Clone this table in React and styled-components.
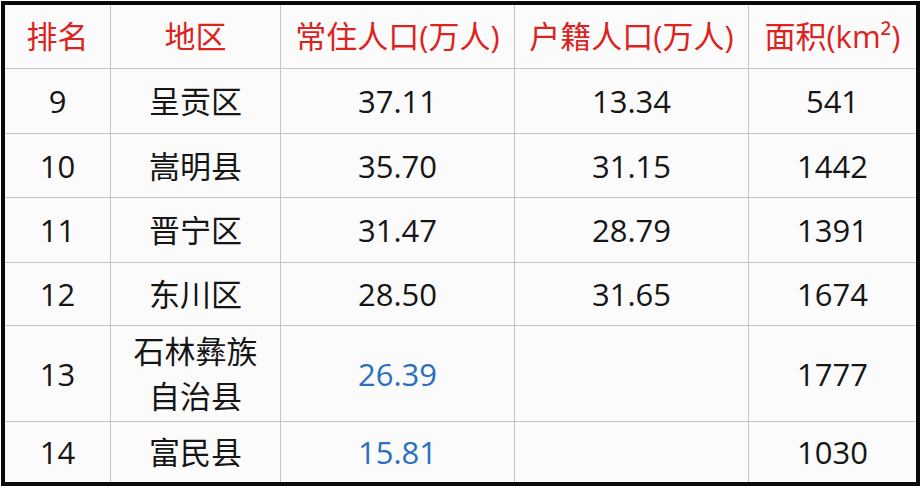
import React from "react"
import styled, { createGlobalStyle } from "styled-components"

const GlobalStyle = createGlobalStyle`
  html, body {
    margin: 0;
    padding: 0;
    background: #ffffff;
  }
`

const Page = styled.div`
  padding: 1px 0 0 1px;
  width: 922px;
  height: 488px;
  box-sizing: border-box;
  background: #ffffff;
`

const Table = styled.div`
  display: grid;
  grid-template-columns: 105px 169px 233px 233px 167px;
  grid-template-rows: 63px 64px 63px 64px 62px 95px 60px;
  gap: 1px;
  width: 919px;
  box-sizing: border-box;
  border: 4px solid #0a0a0a;
  background: #c4c4c6;
`

const Cell = styled.div`
  display: flex;
  align-items: center;
  justify-content: center;
  text-align: center;
  background: #fbfbfc;
  font-family: "Open Sans", "Noto Sans CJK SC", sans-serif;
  font-size: 31px;
  font-weight: 400;
  line-height: 1.45;
  color: ${p => (p.$head ? "#dc2320" : p.$blue ? "#2a70bd" : "#161616")};
  white-space: ${p => (p.$wrap ? "normal" : "nowrap")};
  padding-top: ${p => (p.$head ? "0" : "1px")};
`

const headers = ["排名", "地区", "常住人口(万人)", "户籍人口(万人)", "面积(km²)"]

const rows = [
  { rank: "9", area: "呈贡区", live: "37.11", reg: "13.34", size: "541" },
  { rank: "10", area: "嵩明县", live: "35.70", reg: "31.15", size: "1442" },
  { rank: "11", area: "晋宁区", live: "31.47", reg: "28.79", size: "1391" },
  { rank: "12", area: "东川区", live: "28.50", reg: "31.65", size: "1674" },
  { rank: "13", area: ["石林彝族", "自治县"], live: "26.39", reg: "", size: "1777", blue: true },
  { rank: "14", area: "富民县", live: "15.81", reg: "", size: "1030", blue: true },
]

export default function App() {
  return (
    <Page>
      <GlobalStyle />
      <Table>
        {headers.map(h => (
          <Cell key={h} $head>{h}</Cell>
        ))}

        {rows.map(r => (
          <React.Fragment key={r.rank}>
            <Cell>{r.rank}</Cell>
            {Array.isArray(r.area) ? (
              <Cell $wrap>
                {r.area[0]}
                <br />
                {r.area[1]}
              </Cell>
            ) : (
              <Cell>{r.area}</Cell>
            )}
            <Cell $blue={r.blue}>{r.live}</Cell>
            <Cell>{r.reg}</Cell>
            <Cell>{r.size}</Cell>
          </React.Fragment>
        ))}
      </Table>
    </Page>
  )
}
